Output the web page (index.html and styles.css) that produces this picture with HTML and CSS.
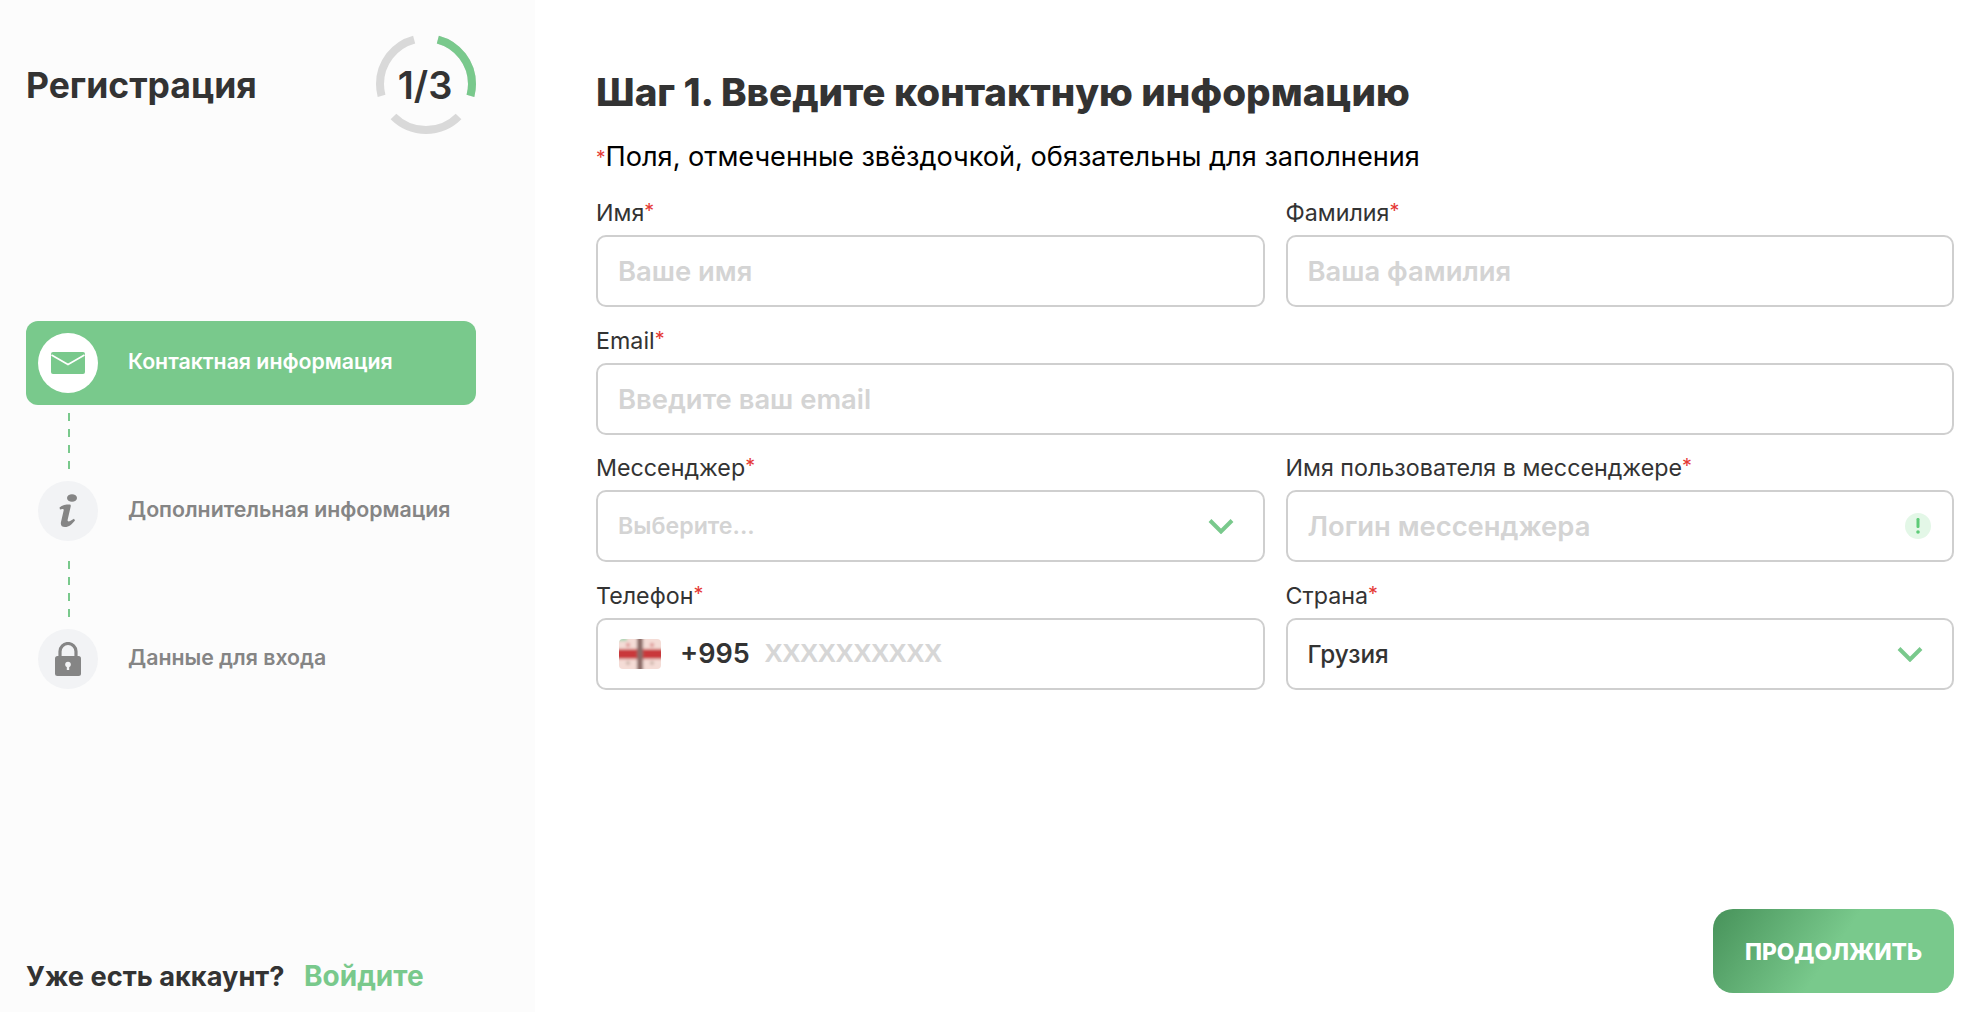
FILE: index.html
```html
<!DOCTYPE html>
<html lang="ru">
<head>
<meta charset="utf-8">
<title>Регистрация</title>
<link rel="stylesheet" href="styles.css">
</head>
<body>
<div class="page">
  <aside class="sidebar">
    <div class="side-head">
      <h2 class="side-title">Регистрация</h2>
      <div class="ring">
        <svg class="ring-svg" width="100" height="100" viewBox="0 0 100 100">
          <circle class="ring-track" cx="50" cy="50" r="46" pathLength="360" stroke-dasharray="90 30" stroke-dashoffset="75"/>
          <circle class="ring-done" cx="50" cy="50" r="46" pathLength="360" stroke-dasharray="90 270" stroke-dashoffset="75"/>
        </svg>
        <span class="ring-text">1/3</span>
      </div>
    </div>
    <nav class="steps">
      <div class="step step-active">
        <span class="step-icon">
          <svg width="34" height="22" viewBox="0 0 34 22"><rect x="0" y="0" width="34" height="22" rx="2" fill="#79c98c"/><path d="M0.5 3 17 12.5 33.5 3" fill="none" stroke="#fff" stroke-width="1.6"/></svg>
        </span>
        <span class="step-label">Контактная информация</span>
      </div>
      <div class="connector"></div>
      <div class="step">
        <span class="step-icon">
          <svg width="20" height="34" viewBox="0 0 20 34"><ellipse cx="14" cy="4" rx="5" ry="3.8" fill="#858585"/><path d="M1.5 13.5C4 11 8 10.5 11.5 10.5 12.5 10.5 13 11.3 12.7 12.5L9.6 26C9.3 27.5 10.8 27.8 12.2 27 13.5 26.3 15 25.5 16 24.8L17 26.5C14 30.3 11 33 7 33 3.8 33 2.3 31 3 28L5.7 16.2C5.9 15.2 5.3 14.8 4.3 15L2 15.6Z" fill="#858585"/></svg>
        </span>
        <span class="step-label">Дополнительная информация</span>
      </div>
      <div class="connector"></div>
      <div class="step">
        <span class="step-icon">
          <svg width="28" height="34" viewBox="0 0 28 34"><path d="M6 15V9.5a8 8 0 0 1 16 0V15" fill="none" stroke="#858585" stroke-width="3.2"/><rect x="1" y="14" width="26" height="20" rx="2.5" fill="#858585"/><circle cx="14" cy="22.5" r="2.8" fill="#f2f3f5"/><rect x="12.8" y="23" width="2.4" height="5" fill="#f2f3f5"/></svg>
        </span>
        <span class="step-label">Данные для входа</span>
      </div>
    </nav>
    <p class="login-line"><span class="login-q">Уже есть аккаунт?</span> <a class="login-link" href="#">Войдите</a></p>
  </aside>
  <main class="main">
    <h1 class="main-title">Шаг 1. Введите контактную информацию</h1>
    <p class="note"><span class="req req-note">*</span>Поля, отмеченные звёздочкой, обязательны для заполнения</p>
    <form class="form">
      <div class="field">
        <div class="label">Имя<span class="req">*</span></div>
        <div class="control"><span class="ph">Ваше имя</span></div>
      </div>
      <div class="field">
        <div class="label">Фамилия<span class="req">*</span></div>
        <div class="control"><span class="ph">Ваша фамилия</span></div>
      </div>
      <div class="field field-wide">
        <div class="label">Email<span class="req">*</span></div>
        <div class="control"><span class="ph">Введите ваш email</span></div>
      </div>
      <div class="field">
        <div class="label">Мессенджер<span class="req">*</span></div>
        <div class="control"><span class="ph ph-light">Выберите...</span>
          <svg class="chevron" width="26" height="16" viewBox="0 0 26 16"><path d="M2 2.5 13 13.5 24 2.5" fill="none" stroke="#79c98c" stroke-width="4"/></svg>
        </div>
      </div>
      <div class="field">
        <div class="label">Имя пользователя в мессенджере<span class="req">*</span></div>
        <div class="control"><span class="ph">Логин мессенджера</span>
          <span class="hint-badge"><svg width="4" height="16" viewBox="0 0 4 16"><rect x="0.5" y="0" width="3" height="10" rx="1.2" fill="#5ecb78"/><circle cx="2" cy="14" r="1.8" fill="#5ecb78"/></svg></span>
        </div>
      </div>
      <div class="field">
        <div class="label">Телефон<span class="req">*</span></div>
        <div class="control control-phone">
          <svg class="flag" width="42" height="30" viewBox="0 0 42 30">
            <defs><filter id="flagblur" x="-10%" y="-10%" width="120%" height="120%"><feGaussianBlur stdDeviation="1.7"/></filter><clipPath id="flagclip"><rect width="42" height="30" rx="4"/></clipPath></defs>
            <g clip-path="url(#flagclip)">
              <g filter="url(#flagblur)">
                <rect x="-4" y="-4" width="50" height="38" fill="#f4dcd6"/>
                <rect x="-4" y="10" width="50" height="10" fill="#c9393a"/>
                <rect x="18" y="-4" width="6" height="38" fill="#8a6a66"/>
                <rect x="-4" y="-4" width="12" height="6" fill="#a8d5b4"/>
                <circle cx="9" cy="6" r="2" fill="#d98a88"/><circle cx="33" cy="6" r="2" fill="#d98a88"/>
                <circle cx="9" cy="24" r="2" fill="#c9b2a8"/><circle cx="33" cy="24" r="2" fill="#c9b2a8"/>
              </g>
            </g>
          </svg>
          <span class="dial">+995</span><span class="ph-phone">XXXXXXXXXX</span>
        </div>
      </div>
      <div class="field">
        <div class="label">Страна<span class="req">*</span></div>
        <div class="control"><span class="value">Грузия</span>
          <svg class="chevron" width="26" height="16" viewBox="0 0 26 16"><path d="M2 2.5 13 13.5 24 2.5" fill="none" stroke="#79c98c" stroke-width="4"/></svg>
        </div>
      </div>
    </form>
    <div class="actions"><button class="btn" type="button">ПРОДОЛЖИТЬ</button></div>
  </main>
</div>
</body>
</html>
```
FILE: styles.css
```css
* { box-sizing: border-box; }
html, body { margin: 0; height: 100%; }
body { font-family: Inter, "Noto Sans", sans-serif; color: #333; background: #fff; }
.page { display: flex; height: 1012px; overflow: hidden; }

.sidebar { width: 535px; flex: none; background: #fcfcfc; padding: 34px 59px 0 26px; display: flex; flex-direction: column; }
.side-head { display: flex; justify-content: space-between; align-items: center; height: 100px; }
.side-title { margin: 0; padding-top: 2px; font-size: 35.5px; font-weight: 700; color: #333; }
.ring { position: relative; width: 100px; height: 100px; }
.ring-svg { display: block; }
.ring-track, .ring-done { fill: none; stroke-width: 8; }
.ring-track { stroke: #d9d9d9; }
.ring-done { stroke: #79c98c; }
.ring-text { position: absolute; inset: 0; padding-top: 1px; padding-right: 2px; display: flex; align-items: center; justify-content: center; font-size: 38px; font-weight: 600; color: #333; }

.steps { margin-top: 187px; display: flex; flex-direction: column; }
.step { display: flex; align-items: center; height: 84px; padding: 0 12px; border-radius: 12px; gap: 30px; color: #858585; font-size: 21.3px; font-weight: 600; }
.step-label { padding-bottom: 5px; }
.step-active { background: #79c98c; color: #fff; }
.step-icon { width: 60px; height: 60px; border-radius: 50%; background: #f2f3f5; display: flex; align-items: center; justify-content: center; flex: none; }
.step-active .step-icon { background: #fff; }
.connector { height: 64px; width: 2px; margin-left: 42px; padding-top: 8px; background: repeating-linear-gradient(to bottom, #79c98c 0 8px, transparent 8px 16px); background-origin: content-box; background-clip: content-box; }

.login-line { margin: auto 0 0; padding-bottom: 19px; font-size: 28px; font-weight: 700; color: #333; }
.login-q { font-size: 27.2px; }
.login-link { color: #79c98c; text-decoration: none; margin-left: 13px; }

.main { flex: 1; background: #fff; padding: 64px 26px 19px 61px; display: flex; flex-direction: column; }
.main-title { margin: 0; font-size: 38.6px; line-height: 56px; font-weight: 800; color: #333; }
.note { margin: 19px 0 0; font-size: 27.15px; line-height: 36px; color: #000; }
.req { color: #e53935; font-size: 0.85em; line-height: 1; vertical-align: 3px; }
.req-note { font-size: 0.7em; vertical-align: 2px; }
.form { display: grid; grid-template-columns: 1fr 1fr; column-gap: 21px; row-gap: 18.5px; margin-top: 23px; }
.field-wide { grid-column: 1 / -1; }
.label { font-size: 23.25px; line-height: 30px; height: 30px; margin-bottom: 7px; color: #333; }
.control { position: relative; height: 72px; border: 2px solid #cfcfcf; border-radius: 10px; background: #fff; display: flex; align-items: center; padding: 0 20px; font-size: 27.4px; }
.ph { color: #d4d4d4; font-weight: 600; }
.ph-light { font-size: 23.2px; }
.value { color: #333; font-weight: 500; font-size: 24.3px; }
.chevron { margin-left: auto; margin-right: 9px; }
.hint-badge { margin-left: auto; margin-right: 1px; width: 26px; height: 26px; border-radius: 50%; background: #e3f7e7; display: flex; align-items: center; justify-content: center; }
.control-phone { padding-left: 21px; }
.flag { flex: none; margin-right: 19px; }
.dial { font-size: 27px; font-weight: 600; color: #333; margin-right: 15px; }
.ph-phone { font-size: 26.6px; font-weight: 700; color: #d6d6d6; font-family: "Liberation Sans", sans-serif; }

.actions { margin-top: auto; display: flex; justify-content: flex-end; }
.btn { width: 241px; height: 84px; border: 0; border-radius: 20px; background: linear-gradient(125deg, #47925a 0%, #79c98c 50%, #79c98c 100%); color: #fff; font-family: Inter, sans-serif; font-size: 22.7px; font-weight: 800; }
```
